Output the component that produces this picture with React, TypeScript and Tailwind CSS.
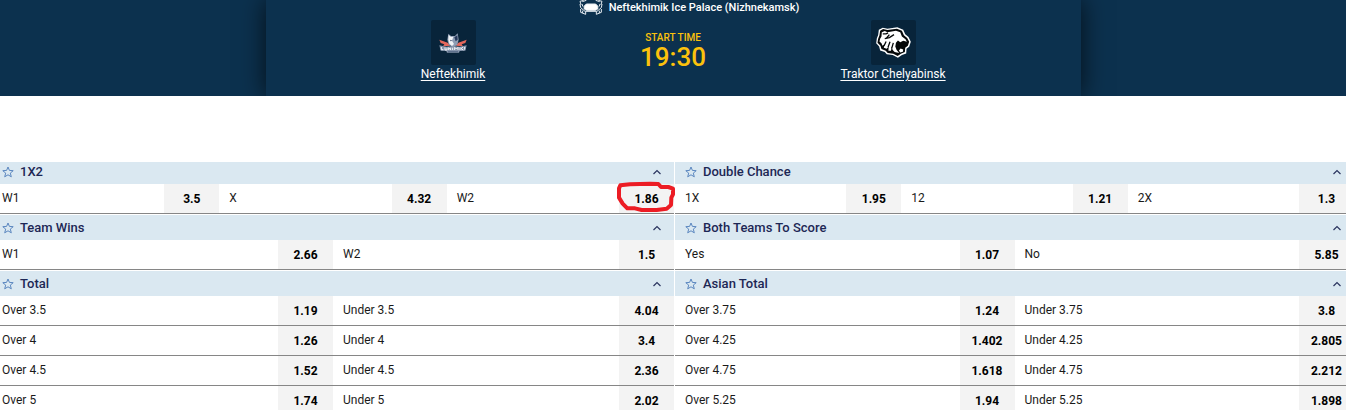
import { useState } from "react";

type Outcome = { label: string; odds: string; marked?: boolean };
type Market = { title: string; rows: Outcome[][] };

const leftMarkets: Market[] = [
  {
    title: "1X2",
    rows: [
      [
        { label: "W1", odds: "3.5" },
        { label: "X", odds: "4.32" },
        { label: "W2", odds: "1.86", marked: true },
      ],
    ],
  },
  {
    title: "Team Wins",
    rows: [[{ label: "W1", odds: "2.66" }, { label: "W2", odds: "1.5" }]],
  },
  {
    title: "Total",
    rows: [
      [{ label: "Over 3.5", odds: "1.19" }, { label: "Under 3.5", odds: "4.04" }],
      [{ label: "Over 4", odds: "1.26" }, { label: "Under 4", odds: "3.4" }],
      [{ label: "Over 4.5", odds: "1.52" }, { label: "Under 4.5", odds: "2.36" }],
      [{ label: "Over 5", odds: "1.74" }, { label: "Under 5", odds: "2.02" }],
    ],
  },
];

const rightMarkets: Market[] = [
  {
    title: "Double Chance",
    rows: [
      [
        { label: "1X", odds: "1.95" },
        { label: "12", odds: "1.21" },
        { label: "2X", odds: "1.3" },
      ],
    ],
  },
  {
    title: "Both Teams To Score",
    rows: [[{ label: "Yes", odds: "1.07" }, { label: "No", odds: "5.85" }]],
  },
  {
    title: "Asian Total",
    rows: [
      [{ label: "Over 3.75", odds: "1.24" }, { label: "Under 3.75", odds: "3.8" }],
      [{ label: "Over 4.25", odds: "1.402" }, { label: "Under 4.25", odds: "2.805" }],
      [{ label: "Over 4.75", odds: "1.618" }, { label: "Under 4.75", odds: "2.212" }],
      [{ label: "Over 5.25", odds: "1.94" }, { label: "Under 5.25", odds: "1.898" }],
    ],
  },
];

function ArenaIcon() {
  return (
    <svg viewBox="0 0 72 45" className="w-6 h-[15px]" fill="none" stroke="#e8eef3" strokeWidth="3">
      <path d="M14 1 L3 4 L6 14 M58 1 L69 4 L66 14 M10 5 L22 1 M62 5 L50 1" />
      <path d="M22 12 H50 L56 18 L57 26 L50 31 H22 L15 26 L16 18 Z" fill="#ffffff" />
      <path d="M3 12 L5 23 L18 34 H54 L67 23 L69 12 M9 12 L12 20 M63 12 L60 20" />
      <path d="M5 27 V37 L20 43 V36 M67 27 V37 L52 43 V36 M11 32 V39 M61 32 V39" />
    </svg>
  );
}

function WolfLogo() {
  return (
    <svg viewBox="0 0 84 60" className="w-7 h-5">
      <path d="M1 20 L26 29 L34 38 L12 40 L16 34 L5 30 Z M83 20 L58 29 L50 38 L72 40 L68 34 L79 30 Z" fill="#e4685c" />
      <path d="M28 2 L36 9 H48 L56 1 L59 20 L55 35 L43 43 L29 35 L25 20 Z" fill="#8d9cb3" />
      <path d="M29 6 L36 12 L43 11 L39 23 L45 33 L39 39 L31 32 L28 20 Z" fill="#f1f4f7" />
      <path d="M46 13 L55 7 L56 20 L50 25 Z M33 20 L40 23 L35 25 Z" fill="#24375a" />
      <path d="M1 37 L22 41 L42 39 L62 41 L83 37 L79 53 L62 54 L60 59 H24 L22 54 L5 53 Z" fill="#8796ad" />
      <path
        d="M7 42 V50 H13 M18 43 V51 H24 V44 M29 51 V44 L35 51 V44 M41 44 V51 M47 51 V43 L52 48 L57 43 V51 M63 43 V51 M72 42 L66 47 L73 51 M77 42 V50"
        stroke="#f3f5f8"
        strokeWidth="3"
        fill="none"
      />
      <path d="M27 56 H57" stroke="#3d5373" strokeWidth="2" />
    </svg>
  );
}

function TigerLogo() {
  return (
    <svg viewBox="6 8 105 94" className="w-[35px] h-[31px]">
      <path
        d="M14 16 L26 10 L40 13 L70 9 L88 16 L94 30 L104 38 L111 53 L106 68 L98 74 L97 88 L84 93 L72 101 L56 93 L38 91 L32 84 L18 79 L15 67 L6 57 L8 42 L12 32 Z"
        fill="#ffffff"
      />
      <path
        d="M18 19 L27 14 L40 17 L69 13 L84 19 L90 33 L100 41 L106 53 L102 65 L94 71 L93 84 L81 89 L71 96 L58 89 L41 87 L35 80 L22 75 L19 65 L10 56 L12 44 L16 33 Z"
        fill="#050708"
      />
      <path
        d="M23 24 L32 20 L40 24 L66 19 L79 24 L84 37 L95 45 L99 53 L88 50 L79 54 L72 49 L66 56 L64 67 L68 78 L76 87 L62 84 L56 78 L53 68 L51 80 L43 80 L44 66 L38 74 L29 71 L33 59 L25 65 L22 57 L16 52 L18 44 L22 37 Z"
        fill="#ffffff"
      />
      <path
        d="M26 29 H36 L42 26 M32 43 L46 40 L60 31 M46 31 L37 42 M36 52 L30 65 M48 53 L42 69 M58 56 L53 73"
        stroke="#050708"
        strokeWidth="4"
        fill="none"
      />
      <path d="M75 79 L80 73 L88 76 L87 83 L79 85 Z" fill="#ffffff" />
    </svg>
  );
}

function Team({ name, logo }: { name: string; logo: React.ReactNode }) {
  return (
    <div className="w-[220px] flex flex-col items-center">
      <div className="size-[45px] rounded-xs bg-[#08243a] flex items-center justify-center">{logo}</div>
      <a href="#" className="text-xs leading-[18px] text-white underline underline-offset-2">
        {name}
      </a>
    </div>
  );
}

function OddsCell({ outcome }: { outcome: Outcome }) {
  return (
    <button className="flex h-[29px] items-stretch text-left text-xs cursor-pointer">
      <span className="flex-1 pl-2.5 leading-7 text-[#1a1a1a]">{outcome.label}</span>
      <span className="relative w-[55px] bg-[#f3f3f3] text-center leading-[30px] font-bold text-black">
        {outcome.odds}
        {outcome.marked && (
          <svg
            viewBox="111 81 174 93"
            className="absolute -left-0.5 -top-0.5 z-10 w-[58px] h-[31px] max-w-none overflow-visible"
            fill="none"
            stroke="#ec1c24"
            strokeWidth="12"
            strokeLinejoin="round"
          >
            <path d="M121 91 L150 88 L210 86 L235 87 L243 96 L265 96 L279 101 L279 118 L274 128 L273 150 L260 161 L230 165 L185 165 L165 160 L142 160 L128 146 L117 128 L117 100 Z" />
          </svg>
        )}
      </span>
    </button>
  );
}

function MarketBlock({ market }: { market: Market }) {
  const [open, setOpen] = useState(true);
  const [starred, setStarred] = useState(false);

  return (
    <section className="mb-px">
      <div className="h-[25px] pl-2.5 pr-3 flex items-center bg-[#dae8f1] text-[#1d2755]">
        <button aria-label="Add to favourites" onClick={() => setStarred(!starred)}>
          <svg viewBox="0 0 12 12" className="size-3 mr-1.5" fill={starred ? "#5a86bf" : "none"} stroke="#5a86bf">
            <path d="M6 1 L7.4 4.4 L11.2 4.7 L8.3 7.1 L9.3 10.8 L6 8.8 L2.7 10.8 L3.7 7.1 L0.8 4.7 L4.6 4.4 Z" />
          </svg>
        </button>
        <h2 className="flex-1 text-[13px] leading-6 font-medium">{market.title}</h2>
        <button aria-label="Toggle market" onClick={() => setOpen(!open)}>
          <svg viewBox="0 0 10 6" className="w-2.5 h-1.5" fill="none" stroke="#2b3560" strokeWidth="1.2">
            <path d={open ? "M1.5 5 L5 1.5 L8.5 5" : "M1.5 1.5 L5 5 L8.5 1.5"} />
          </svg>
        </button>
      </div>
      {open &&
        market.rows.map((row, i) => (
          <div key={i} className="grid grid-flow-col auto-cols-fr border-b border-[#868686]">
            {row.map((outcome) => (
              <OddsCell key={outcome.label} outcome={outcome} />
            ))}
          </div>
        ))}
    </section>
  );
}

export default function App() {
  return (
    <div className="h-screen overflow-hidden bg-white font-['Roboto',sans-serif]">
      <header className="h-24 overflow-hidden bg-[#0c314e]">
        <div className="mx-auto h-full max-w-[815px] bg-[#0c314e] shadow-[0_0_24px_rgba(0,0,0,0.7)]">
          <div className="h-5 pl-8 flex items-start justify-center gap-1.5">
            <ArenaIcon />
            <p className="text-[11px] leading-4 font-medium text-white">Neftekhimik Ice Palace (Nizhnekamsk)</p>
          </div>
          <div className="flex justify-center">
            <Team name="Neftekhimik" logo={<WolfLogo />} />
            <div className="w-[220px] pt-3 text-center font-medium text-[#fcc20c]">
              <p className="text-[10px] leading-3">START TIME</p>
              <p className="text-[26px] leading-[26px]">19:30</p>
            </div>
            <Team name="Traktor Chelyabinsk" logo={<TigerLogo />} />
          </div>
        </div>
      </header>

      <main className="mt-[66px] overflow-hidden">
        <div className="-mt-[3px] -ml-2 -mr-2 grid grid-cols-[682fr_679fr] gap-px">
          <div>
            {leftMarkets.map((market) => (
              <MarketBlock key={market.title} market={market} />
            ))}
          </div>
          <div>
            {rightMarkets.map((market) => (
              <MarketBlock key={market.title} market={market} />
            ))}
          </div>
        </div>
      </main>
    </div>
  );
}
